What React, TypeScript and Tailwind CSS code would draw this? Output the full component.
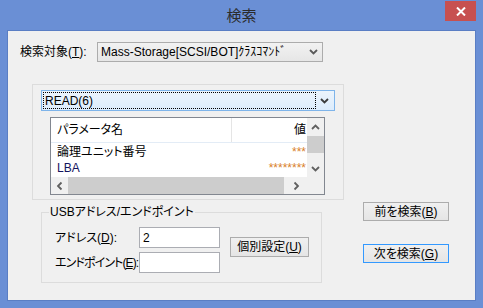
import React from "react";

const font = { fontFamily: '"Liberation Sans", "Noto Sans CJK JP", sans-serif' };

function Chevron({ dir = "down", color = "#404040" }: { dir?: "down" | "up" | "left" | "right"; color?: string }) {
  const rot = { down: 0, up: 180, left: 90, right: -90 }[dir];
  return (
    <svg width="9" height="6" viewBox="0 0 9 6" style={{ transform: `rotate(${rot}deg)` }}>
      <path d="M1 1 L4.5 4.5 L8 1" fill="none" stroke={color} strokeWidth="1.8" />
    </svg>
  );
}

function Btn({ children, primary = false, className = "" }: { children: React.ReactNode; primary?: boolean; className?: string }) {
  return (
    <div
      className={`flex items-center justify-center whitespace-nowrap text-[12px] text-black bg-gradient-to-b from-[#f0f0f0] to-[#e5e5e5] border ${
        primary ? "border-[#3399ff]" : "border-[#acacac]"
      } ${className}`}
    >
      {children}
    </div>
  );
}

export default function App() {
  return (
    <div className="w-[483px] h-[308px] bg-[#6a8fd5] flex flex-col px-[7px] pb-[7px] [font-feature-settings:'palt']" style={font}>
      {/* title bar */}
      <div className="relative h-[30px] flex items-center justify-center">
        <span className="text-[15px] text-[#2b2b2b] mt-[2px]">検索</span>
        <div className="absolute right-0 top-[1px] w-[31px] h-[20px] bg-[#c75050] flex items-center justify-center">
          <svg width="10" height="9" viewBox="0 0 10 9">
            <path d="M1 0.5 L9 8.5 M9 0.5 L1 8.5" stroke="#fff" strokeWidth="2" />
          </svg>
        </div>
      </div>

      {/* client */}
      <div className="flex-1 border border-[#5a7ec4] bg-[#f0f0f0] pt-[11px] pl-[12px] text-[12px] text-black">
        <div className="flex items-center h-[20px]">
          <span className="w-[77px] whitespace-nowrap">
            検索対象(<u>T</u>):
          </span>
          <div className="w-[226px] h-[20px] border border-[#acacac] bg-gradient-to-b from-[#f2f2f2] to-[#e6e6e6] flex items-center pl-[3px] pr-[4px]">
            <span className="flex-1 whitespace-nowrap">Mass-Storage[SCSI/BOT]ｸﾗｽｺﾏﾝﾄﾞ</span>
            <Chevron color="#5a5a5a" />
          </div>
        </div>

        {/* command group */}
        <div className="mt-[22px] ml-[12px] w-[312px] h-[116px] border border-[#dcdcdc] pt-[5px] pl-[8px]">
          <div className="w-[294px] h-[21px] border border-[#7eb4ea] bg-gradient-to-b from-[#ecf4fc] to-[#dcecfc] flex items-center p-[1px]">
            <div className="w-[273px] h-[17px] border border-dotted border-black flex items-center pl-[1px]">READ(6)</div>
            <div className="flex-1 flex justify-center">
              <Chevron color="#3c3c3c" />
            </div>
          </div>

          <div className="mt-[6px] ml-[9px] w-[275px] h-[78px] border border-[#828790] bg-white flex flex-col">
            <div className="flex flex-1">
              <div className="flex-1 flex flex-col">
                <div className="h-[25px] flex border-b border-[#e3ecf6]">
                  <div className="w-[181px] border-r border-[#e5e5e5] flex items-center pl-[6px]">パラメータ名</div>
                  <div className="flex-1 flex items-center justify-end pr-[1px]">値</div>
                </div>
                <div className="h-[17px] flex items-center justify-between pl-[6px] pr-[1px]">
                  <span>論理ユニット番号</span>
                  <span className="text-[#d9822b]">***</span>
                </div>
                <div className="h-[16px] flex items-center justify-between pl-[6px] pr-[1px]">
                  <span className="text-[#14145e]">LBA</span>
                  <span className="text-[#d9822b]">********</span>
                </div>
              </div>
              <div className="w-[17px] bg-[#f0f0f0] flex flex-col items-center">
                <div className="h-[17px] flex items-center justify-center">
                  <Chevron dir="up" color="#606060" />
                </div>
                <div className="w-[17px] h-[17px] bg-[#cdcdcd] mt-[1px]" />
                <div className="flex-1" />
                <div className="h-[17px] flex items-center justify-center">
                  <Chevron color="#606060" />
                </div>
              </div>
            </div>
            <div className="h-[17px] flex bg-[#f0f0f0]">
              <div className="w-[17px] flex items-center justify-center">
                <Chevron dir="left" color="#606060" />
              </div>
              <div className="w-[216px] bg-[#cdcdcd]" />
              <div className="w-[24px] flex items-center justify-center">
                <Chevron dir="right" color="#606060" />
              </div>
              <div className="flex-1" />
            </div>
          </div>
        </div>

        {/* bottom */}
        <div className="flex items-start">
          <div className="relative mt-[12px] ml-[21px] w-[281px] h-[71px] border border-[#dcdcdc] pt-[14px] pl-[13px] flex">
            <span className="absolute left-[7px] top-[-9px] bg-[#f0f0f0] px-[1px] leading-[16px] whitespace-nowrap">USBアドレス/エンドポイント</span>
            <div className="flex flex-col gap-[4px]">
              <div className="flex items-center">
                <span className="w-[84px] whitespace-nowrap">
                  アドレス(<u>D</u>):
                </span>
                <div className="w-[81px] h-[21px] border border-[#abadb3] bg-white flex items-center pl-[3px]">2</div>
              </div>
              <div className="flex items-center">
                <span className="w-[84px] whitespace-nowrap tracking-[-0.9px]">
                  エンドポイント(<u>E</u>):
                </span>
                <div className="w-[81px] h-[21px] border border-[#abadb3] bg-white" />
              </div>
            </div>
            <Btn className="ml-[10px] mt-[10px] w-[79px] h-[20px]">
              個別設定(<u>U</u>)
            </Btn>
          </div>

          <div className="ml-[41px] mt-[2px] flex flex-col gap-[23px]">
            <Btn className="w-[86px] h-[19px]">
              前を検索(<u>B</u>)
            </Btn>
            <Btn primary className="w-[86px] h-[19px]">
              次を検索(<u>G</u>)
            </Btn>
          </div>
        </div>
      </div>
    </div>
  );
}
